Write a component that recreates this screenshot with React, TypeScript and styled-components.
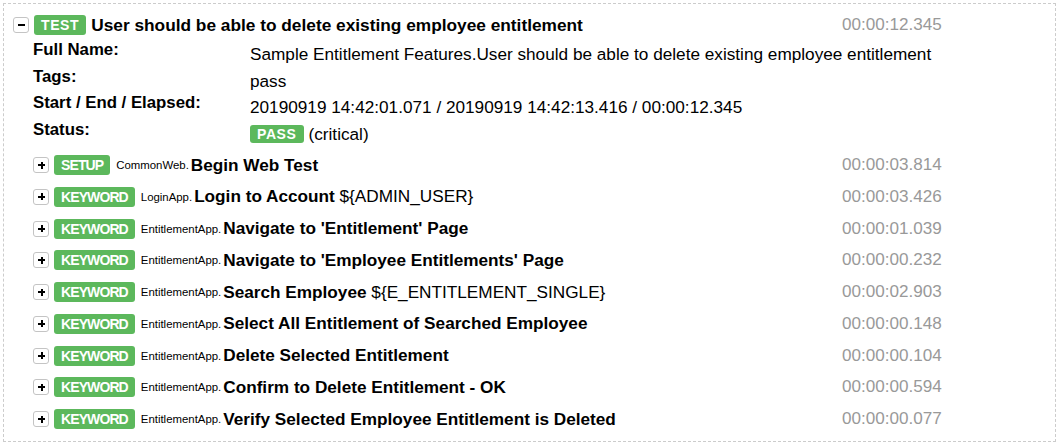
import React from "react";
import styled, { createGlobalStyle, css } from "styled-components";

const GlobalStyle = createGlobalStyle`
  html, body { margin: 0; padding: 0; background: #fff; }
  body {
    font-family: "Liberation Sans", Arial, Helvetica, sans-serif;
    color: #000;
  }
  #root { padding: 3px; }
`;

const GREEN = "#5cb85c";

const Panel = styled.div`
  border: 1px dashed #cccccc;
  padding: 5px 9px 6px 9px;
  display: flex;
  flex-direction: column;
`;

const Row = styled.div<{ $indent?: boolean; $h: number }>`
  display: grid;
  grid-template-columns: 1fr 204px;
  align-items: center;
  height: ${(p) => p.$h}px;
  padding-left: ${(p) => (p.$indent ? 20 : 0)}px;
`;

const Head = styled.div`
  display: flex;
  align-items: center;
  white-space: nowrap;
  min-width: 0;
`;

const Toggle = styled.span<{ $open?: boolean }>`
  position: relative;
  box-sizing: border-box;
  width: 16px;
  height: 16px;
  border: 1px solid #c4c4c4;
  border-radius: 3px;
  background: #fff;
  flex: none;
  margin-right: 5px;
  &::before {
    content: "";
    position: absolute;
    left: 4px;
    top: 6px;
    width: 7px;
    height: 2px;
    background: #000;
  }
  ${(p) =>
    !p.$open &&
    css`
      &::after {
        content: "";
        position: absolute;
        left: 6.5px;
        top: 3.5px;
        width: 2px;
        height: 7px;
        background: #000;
      }
    `}
`;

const Badge = styled.span<{ $spaced?: boolean; $h?: number }>`
  display: inline-flex;
  align-items: center;
  height: ${(p) => p.$h ?? 20}px;
  padding: 0 7px;
  border-radius: 3px;
  background: ${GREEN};
  color: #fff;
  font-weight: bold;
  font-size: 14px;
  letter-spacing: ${(p) => (p.$spaced ? "0.6px" : "-0.9px")};
  flex: none;
`;

const Title = styled.span`
  font-size: 17.3px;
  font-weight: bold;
  margin-left: 5px;
`;

const Parent = styled.span`
  font-size: 11.4px;
  margin-left: 6px;
  margin-right: 2px;
`;

const Name = styled.span`
  font-size: 17.2px;
  font-weight: bold;
`;

const Arg = styled.span`
  font-size: 17.2px;
`;

const Time = styled.span`
  font-size: 17.1px;
  color: #999;
  white-space: nowrap;
`;

const Meta = styled.div`
  display: grid;
  grid-template-columns: 217px 1fr;
  grid-auto-rows: 26.67px;
  padding-left: 20px;
  margin-bottom: 1.5px;
  align-items: center;
`;

const MetaLabel = styled.div`
  font-size: 16.8px;
  font-weight: bold;
  line-height: 18.67px;
  padding-bottom: 8px;
  white-space: nowrap;
`;

const MetaValue = styled.div`
  font-size: 17.2px;
  line-height: 26.67px;
  white-space: nowrap;
  display: flex;
  align-items: center;
`;

const Critical = styled.span`
  margin-left: 5px;
`;

type Kw = { type: "SETUP" | "KEYWORD"; lib: string; name: string; arg?: string; time: string };

const keywords: Kw[] = [
  { type: "SETUP", lib: "CommonWeb", name: "Begin Web Test", time: "00:00:03.814" },
  { type: "KEYWORD", lib: "LoginApp", name: "Login to Account", arg: "${ADMIN_USER}", time: "00:00:03.426" },
  { type: "KEYWORD", lib: "EntitlementApp", name: "Navigate to 'Entitlement' Page", time: "00:00:01.039" },
  { type: "KEYWORD", lib: "EntitlementApp", name: "Navigate to 'Employee Entitlements' Page", time: "00:00:00.232" },
  { type: "KEYWORD", lib: "EntitlementApp", name: "Search Employee", arg: "${E_ENTITLEMENT_SINGLE}", time: "00:00:02.903" },
  { type: "KEYWORD", lib: "EntitlementApp", name: "Select All Entitlement of Searched Employee", time: "00:00:00.148" },
  { type: "KEYWORD", lib: "EntitlementApp", name: "Delete Selected Entitlement", time: "00:00:00.104" },
  { type: "KEYWORD", lib: "EntitlementApp", name: "Confirm to Delete Entitlement - OK", time: "00:00:00.594" },
  { type: "KEYWORD", lib: "EntitlementApp", name: "Verify Selected Employee Entitlement is Deleted", time: "00:00:00.077" },
];

export default function App() {
  return (
    <>
      <GlobalStyle />
      <Panel>
        <Row $h={32}>
          <Head>
            <Toggle $open />
            <Badge $spaced>TEST</Badge>
            <Title>User should be able to delete existing employee entitlement</Title>
          </Head>
          <Time>00:00:12.345</Time>
        </Row>
        <Meta>
          <MetaLabel>Full Name:</MetaLabel>
          <MetaValue>Sample Entitlement Features.User should be able to delete existing employee entitlement</MetaValue>
          <MetaLabel>Tags:</MetaLabel>
          <MetaValue>pass</MetaValue>
          <MetaLabel>Start / End / Elapsed:</MetaLabel>
          <MetaValue>20190919 14:42:01.071 / 20190919 14:42:13.416 / 00:00:12.345</MetaValue>
          <MetaLabel>Status:</MetaLabel>
          <MetaValue>
            <Badge $spaced $h={18}>PASS</Badge>
            <Critical>(critical)</Critical>
          </MetaValue>
        </Meta>
        {keywords.map((k, i) => (
          <Row key={i} $indent $h={31.75}>
            <Head>
              <Toggle />
              <Badge>{k.type}</Badge>
              <Parent>{k.lib}.</Parent>
              <Name>{k.name}</Name>
              {k.arg && <Arg>&nbsp;{k.arg}</Arg>}
            </Head>
            <Time>{k.time}</Time>
          </Row>
        ))}
      </Panel>
    </>
  );
}
